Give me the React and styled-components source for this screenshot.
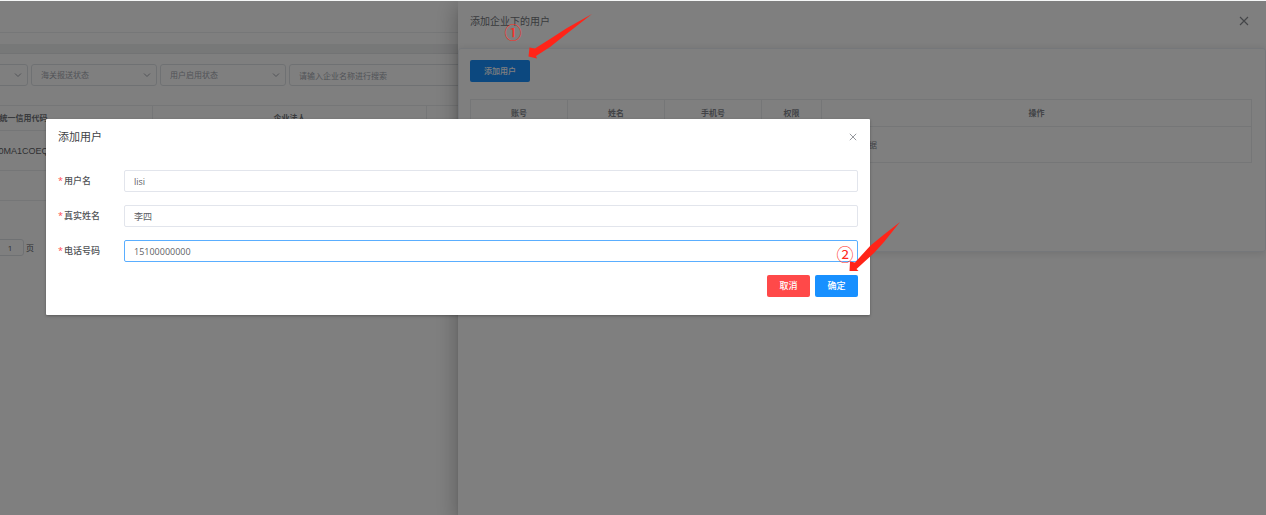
import React, { useState } from 'react'
import styled, { createGlobalStyle } from 'styled-components'

const GlobalStyle = createGlobalStyle`
  * {
    box-sizing: border-box;
  }

  body {
    margin: 0;
    color: #606266;
    font-family: 'Open Sans', 'Noto Sans CJK SC', sans-serif;
    font-size: 8px;
    line-height: 12px;
  }

  button,
  input,
  select {
    font-family: inherit;
    font-size: inherit;
    line-height: inherit;
    color: inherit;
  }
`

const Screen = styled.div`
  position: relative;
  min-height: 100vh;
  overflow: hidden;
  background: #fff;
  border-top: 1px solid #f5f7f7;
`

/* list page, scrolled to the right */
const Page = styled.main`
  margin-left: -106px;
`

const TopBar = styled.header`
  height: 32px;
  border-bottom: 1px solid #eceef0;
`

const TabBar = styled.div`
  height: 20px;
  border-bottom: 9px solid #eff0f1;
`

const Filters = styled.form`
  display: flex;
  gap: 3px;
  padding: 10px 12px 0 8px;
  border-top: 1px solid #e4e6e8;
`

const SelectBox = styled.div`
  position: relative;
  flex: 0 0 126px;
  color: #a4a8b0;

  select {
    width: 100%;
    height: 22px;
    padding: 0 20px 0 9px;
    appearance: none;
    background: none;
    border: 1px solid #dfe2e6;
    border-radius: 3px;
  }

  svg {
    position: absolute;
    top: 7px;
    right: 6px;
    pointer-events: none;
  }
`

const SearchInput = styled.input`
  flex: 1;
  min-width: 0;
  height: 22px;
  padding: 0 9px;
  border: 1px solid #dfe2e6;
  border-radius: 3px;

  &::placeholder {
    color: #a4a8b0;
  }
`

const Table = styled.table`
  width: 100%;
  table-layout: fixed;
  border-collapse: collapse;
  text-align: center;

  th,
  td {
    padding: 0;
    border: 1px solid #ebedef;
  }

  th {
    height: ${props => props.$head}px;
    color: #72757a;
    font-weight: bold;
  }

  td {
    height: ${props => props.$row}px;
  }
`

const ListTable = styled.div`
  margin-top: 19px;
  min-height: 96px;
  border-bottom: 1px solid #ebedef;

  td {
    font-family: 'Liberation Sans', sans-serif;
    font-size: 9px;
  }
`

const Pager = styled.nav`
  display: flex;
  align-items: center;
  gap: 2px;
  padding: 38px 0 0 102px;

  input {
    width: 28px;
    height: 17px;
    padding: 0;
    border: 1px solid #dfe2e6;
    border-radius: 3px;
    text-align: center;
  }
`

const Drawer = styled.aside`
  position: absolute;
  top: 0;
  right: 0;
  bottom: 0;
  left: 458px;
  background: #fff;
  box-shadow: 0 6px 20px 2px rgba(0, 0, 0, 0.26),
    0 5px 6px -3px rgba(0, 0, 0, 0.2);
`

const DrawerHeader = styled.header`
  display: flex;
  align-items: center;
  justify-content: space-between;
  height: 39px;
  padding: 0 17px 0 12px;

  h2 {
    margin: 0;
    color: #72767b;
    font-size: 10px;
    font-weight: normal;
  }
`

const Card = styled.section`
  margin: 8px 0 0;
  padding: 11px 13px 88px 11px;
  border: 1px solid #ebeef5;
  border-radius: 3px;
  box-shadow: 0 1px 8px rgba(0, 0, 0, 0.12);
`

const CardTable = styled.div`
  margin-top: 17px;

  th,
  td {
    color: #84878d;
  }
`

const IconButton = styled.button`
  display: flex;
  padding: 0;
  border: 0;
  background: none;
  color: ${props => props.$color};
  cursor: pointer;
`

const Button = styled.button`
  min-width: 43px;
  height: 22px;
  padding: 0 ${props => props.$pad || 12}px;
  border: 0;
  border-radius: 2px;
  background: ${props => (props.$danger ? '#ff4949' : '#1890ff')};
  color: #fff;
  font-weight: 500;
  cursor: pointer;
`

const Mask = styled.div`
  position: absolute;
  inset: 0;
  background: rgba(0, 0, 0, 0.5);
`

const Dialog = styled.section`
  margin: 118px 396px 0 46px;
  padding: 12px 12px 18px;
  background: #fff;
  border-radius: 1px;
  box-shadow: 0 1px 3px rgba(0, 0, 0, 0.3);
  font-size: 9px;
`

const DialogHeader = styled.header`
  display: flex;
  align-items: center;
  justify-content: space-between;
  height: 12px;
  padding-right: 1px;

  h2 {
    margin: 0;
    color: #404246;
    font-size: 11px;
    line-height: 14px;
    font-weight: normal;
  }
`

const DialogForm = styled.form`
  display: flex;
  flex-direction: column;
  gap: 13px;
  padding-top: 27px;
`

const Field = styled.div`
  display: flex;
  align-items: center;

  label {
    flex: 0 0 66px;
    color: #505256;
    font-weight: 500;
  }

  label::before {
    content: '*';
    margin-right: 1px;
    color: #ff4949;
  }

  input {
    flex: 1;
    min-width: 0;
    height: 22px;
    padding: 0 9px;
    border: 1px solid #e2e5ec;
    border-radius: 2px;
    outline: none;
  }

  input:focus {
    border-color: #5aaeff;
  }
`

const Actions = styled.div`
  display: flex;
  justify-content: flex-end;
  gap: 5px;
`

/* numbered step drawn over the screen */
const Step = styled.div`
  position: absolute;
  top: ${props => props.$top}px;
  left: ${props => props.$left}px;
  color: #ff2a1c;
  pointer-events: none;

  span {
    display: block;
    width: 18px;
    font-family: 'Noto Sans CJK SC', sans-serif;
    font-size: 17px;
    line-height: 18px;
    text-align: center;
  }

  svg {
    position: absolute;
    top: ${props => props.$arrowTop}px;
    left: ${props => props.$arrowLeft}px;
    fill: #ff2418;
  }
`

const Chevron = () => (
  <svg width="8" height="8" viewBox="0 0 8 8" fill="none" stroke="currentColor">
    <path d="M1 2.5l3 3 3-3" />
  </svg>
)

const Cross = ({ size }) => (
  <svg
    width={size}
    height={size}
    viewBox="0 0 10 10"
    fill="none"
    stroke="currentColor"
    strokeWidth="1.2"
  >
    <path d="M1 1l8 8M9 1l-8 8" />
  </svg>
)

const filters = ['', '海关报送状态', '用户启用状态']

const fields = [
  { id: 'username', label: '用户名', value: 'lisi' },
  { id: 'realname', label: '真实姓名', value: '李四' },
  { id: 'phone', label: '电话号码', value: '15100000000', focus: true },
]

const App = () => {
  const [values, setValues] = useState(
    Object.fromEntries(fields.map(field => [field.id, field.value]))
  )

  return (
    <Screen>
      <GlobalStyle />
      <Page>
        <TopBar />
        <TabBar />
        <Filters>
          {filters.map(name => (
            <SelectBox key={name}>
              <select aria-label={name || undefined}>
                <option>{name}</option>
              </select>
              <Chevron />
            </SelectBox>
          ))}
          <SearchInput
            aria-label="企业名称"
            placeholder="请输入企业名称进行搜索"
          />
        </Filters>
        <ListTable>
          <Table $head={25} $row={40}>
            <colgroup>
              <col width="258" />
              <col width="274" />
              <col />
            </colgroup>
            <thead>
              <tr>
                <th>统一信用代码</th>
                <th>企业法人</th>
                <th />
              </tr>
            </thead>
            <tbody>
              <tr>
                <td>0MA1COEQ</td>
                <td />
                <td />
              </tr>
            </tbody>
          </Table>
        </ListTable>
        <Pager>
          <input id="page" defaultValue="1" />
          <label htmlFor="page">页</label>
        </Pager>
      </Page>

      <Drawer>
        <DrawerHeader>
          <h2>添加企业下的用户</h2>
          <IconButton $color="#8a8d92" aria-label="关闭">
            <Cross size={10} />
          </IconButton>
        </DrawerHeader>
        <Card>
          <Button $pad={14}>添加用户</Button>
          <CardTable>
            <Table $head={27} $row={36}>
              <colgroup>
                <col width="97" />
                <col width="97" />
                <col width="97" />
                <col width="60" />
                <col />
              </colgroup>
              <thead>
                <tr>
                  <th>账号</th>
                  <th>姓名</th>
                  <th>手机号</th>
                  <th>权限</th>
                  <th>操作</th>
                </tr>
              </thead>
              <tbody>
                <tr>
                  <td colSpan="5">暂无数据</td>
                </tr>
              </tbody>
            </Table>
          </CardTable>
        </Card>
      </Drawer>

      <Mask>
        <Dialog role="dialog" aria-labelledby="dialog-title">
          <DialogHeader>
            <h2 id="dialog-title">添加用户</h2>
            <IconButton $color="#909399" aria-label="关闭">
              <Cross size={8} />
            </IconButton>
          </DialogHeader>
          <DialogForm onSubmit={e => e.preventDefault()}>
            {fields.map(field => (
              <Field key={field.id}>
                <label htmlFor={field.id}>{field.label}</label>
                <input
                  id={field.id}
                  value={values[field.id]}
                  autoFocus={field.focus}
                  onChange={e =>
                    setValues({ ...values, [field.id]: e.target.value })
                  }
                />
              </Field>
            ))}
            <Actions>
              <Button type="button" $danger>
                取消
              </Button>
              <Button type="submit">确定</Button>
            </Actions>
          </DialogForm>
        </Dialog>
      </Mask>

      <Step $top={22} $left={504} $arrowTop={-10} $arrowLeft={22}>
        <span>①</span>
        <svg width="68" height="48" viewBox="0 0 68 48">
          <path d="M66 1L41 15 24 26 9 35.5 3.5 34.5 2.5 43.5 11 45.5 10 43 24 34 41 20.5Z" />
        </svg>
      </Step>
      <Step $top={244} $left={836} $arrowTop={-24} $arrowLeft={12}>
        <span>②</span>
        <svg width="54" height="52" viewBox="0 0 54 52">
          <path d="M52 1L36 13.5 22.5 24.5 7 41.5 2 40.5 1.5 50 10.5 50 8.5 48 26 32 36 21Z" />
        </svg>
      </Step>
    </Screen>
  )
}

export default App
